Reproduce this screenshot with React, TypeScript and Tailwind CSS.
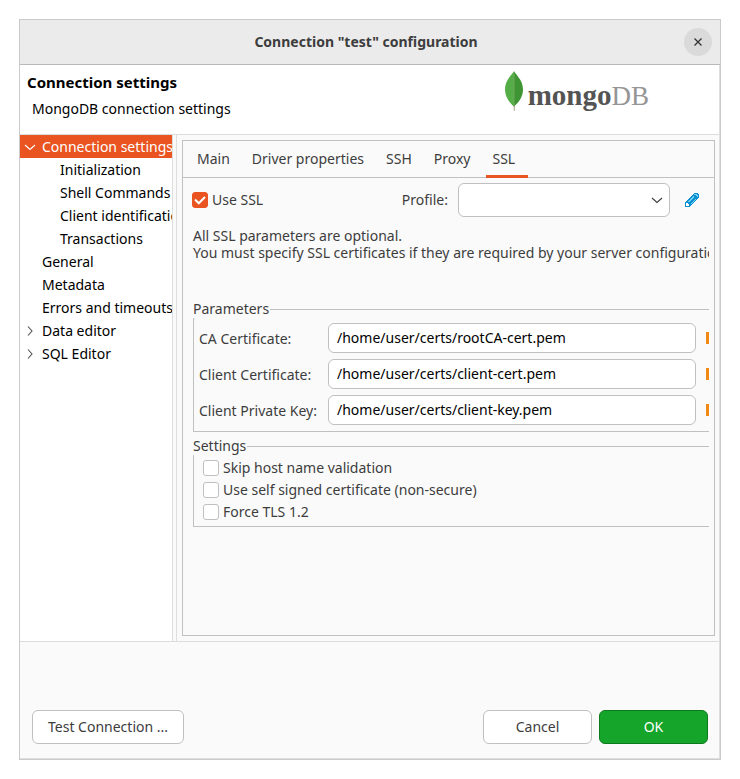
import React, { useState } from "react";

type TreeItem = { label: string; level: 0 | 1; arrow?: "open" | "closed"; selected?: boolean };

const tree: TreeItem[] = [
  { label: "Connection settings", level: 0, arrow: "open", selected: true },
  { label: "Initialization", level: 1 },
  { label: "Shell Commands", level: 1 },
  { label: "Client identification", level: 1 },
  { label: "Transactions", level: 1 },
  { label: "General", level: 0 },
  { label: "Metadata", level: 0 },
  { label: "Errors and timeouts", level: 0 },
  { label: "Data editor", level: 0, arrow: "closed" },
  { label: "SQL Editor", level: 0, arrow: "closed" },
];

const tabs = ["Main", "Driver properties", "SSH", "Proxy", "SSL"];

const certificates = [
  { id: "ca", label: "CA Certificate:", path: "/home/user/certs/rootCA-cert.pem" },
  { id: "client", label: "Client Certificate:", path: "/home/user/certs/client-cert.pem" },
  { id: "key", label: "Client Private Key:", path: "/home/user/certs/client-key.pem" },
];

const options = ["Skip host name validation", "Use self signed certificate (non-secure)", "Force TLS 1.2"];

function Chevron({ open, className = "" }: { open: boolean; className?: string }) {
  return (
    <svg viewBox="0 0 12 12" fill="none" stroke="currentColor" className={`size-3 shrink-0 ${className}`} aria-hidden="true">
      <path d={open ? "M1 4l5 4.5L11 4" : "M4 1.5l4 4.5-4 4.5"} strokeWidth="1.1" />
    </svg>
  );
}

function CheckBox({ label, checked = false }: { label: string; checked?: boolean }) {
  return (
    <label className="flex h-[22px] items-center gap-1 whitespace-nowrap">
      <span className="grid size-4 shrink-0">
        <input
          type="checkbox"
          defaultChecked={checked}
          className="peer col-start-1 row-start-1 size-4 appearance-none rounded-[3px] border border-[#c0c0c0] bg-white checked:border-[#e95420] checked:bg-[#e95420]"
        />
        <svg viewBox="0 0 16 16" fill="none" className="pointer-events-none col-start-1 row-start-1 hidden size-4 peer-checked:block" aria-hidden="true">
          <path d="M3 7.5L6.8 11.3L13 5" stroke="#fff" strokeWidth="2" />
        </svg>
      </span>
      {label}
    </label>
  );
}

function Leaf() {
  return (
    <svg viewBox="0 0 20 42" className="h-[42px] w-5" aria-hidden="true">
      <path d="M9.4 34h1.6l-.2 7h-1z" fill="#b8b09a" />
      <path d="M10 1C9 4 1 9.500 1 19.500c0 8 5 13.500 9 17z" fill="#55ad47" />
      <path d="M10 1c1 3 9 8.500 9 18.500 0 8-5 13.500-9 17z" fill="#3f9533" />
      <path d="M10 4v32" stroke="#7fae6d" strokeWidth=".7" />
    </svg>
  );
}

function Pencil() {
  return (
    <svg viewBox="0 0 14 14" className="size-[14px]" shapeRendering="crispEdges" aria-hidden="true">
      <path d="M0 14V9h1V8h1V7h1V6h1V5h1V4h1V3h1V2h1V1h1V0h4v1h1v4h-1v1h-1v1h-1v1h-1v1H9v1H8v1H7v1H6v1H5v1z" fill="#0d8fd0" />
      <path d="M3 9V8h1V7h1V6h1V5h1V4h1V3h1v2H8v1H7v1H6v1H5v1zM6 11v-1h1V9h1V8h1V7h1V6h1v1h-1v1H9v1H8v1H7v1zM9 2V1h3v1h1v2h-1V3h-1V2z" fill="#6fd0f5" />
      <path d="M1 13v-3h2v1h1v2z" fill="#fff" />
    </svg>
  );
}

function Group({ title, className, children }: { title: string; className: string; children: React.ReactNode }) {
  return (
    <fieldset className={`min-w-0 border border-r-0 border-[#c0c0c0] ${className}`}>
      <legend className="-ml-px bg-[#fafafa] pr-px leading-[18px]">{title}</legend>
      {children}
    </fieldset>
  );
}

export default function App() {
  const [activeTab, setActiveTab] = useState("SSL");

  return (
    <div className="flex min-h-screen bg-white p-[19px] font-['Noto_Sans',sans-serif] text-[14px] leading-[18px] text-[#3d3d3d]">
      <div className="flex min-w-0 flex-1 flex-col border border-[#cbcbcb] bg-[#fafafa]">
        <header className="grid h-[45px] grid-cols-[1fr_auto_1fr] items-center border-b border-[#b8b8b8] bg-[#ebebeb] pr-2">
          <h1 className="col-start-2 font-bold">Connection "test" configuration</h1>
          <button type="button" aria-label="Close" className="flex size-7 items-center justify-center justify-self-end rounded-full bg-[#dadada]">
            <svg viewBox="0 0 8 8" className="size-2" stroke="#333" strokeWidth="1.3" aria-hidden="true">
              <path d="M.5.5l7 7M7.5.5l-7 7" />
            </svg>
          </button>
        </header>

        <div className="flex min-h-0 flex-1 flex-col border-r border-b border-[#dedede]">
          <div className="flex h-[70px] items-start justify-between border-b border-[#dcdcdc] bg-white pt-2 pr-[70px] pl-[7px] text-black">
            <div>
              <h2 className="text-[15px] font-bold">Connection settings</h2>
              <p className="mt-[9px] pl-[5px]">MongoDB connection settings</p>
            </div>
            <div className="-mt-[3px] flex items-start gap-1 font-['Liberation_Serif',serif] leading-[42px]">
              <Leaf />
              <div className="mt-1 flex items-baseline">
                <span className="text-[29px] font-bold text-[#545454]">mongo</span>
                <span className="text-[27px] text-[#959595]">DB</span>
              </div>
            </div>
          </div>

          <div className="flex min-h-0 flex-1 border-b border-[#dcdcdc]">
            <nav className="w-[153px] shrink-0 overflow-hidden border-r border-[#dedede] bg-white text-black">
              <ul>
                {tree.map((item) => (
                  <li
                    key={item.label}
                    className={`flex h-[23px] items-center whitespace-nowrap ${item.level ? "pl-10" : "pl-1"} ${
                      item.selected ? "bg-[#e95420] text-white" : ""
                    }`}
                  >
                    {item.level === 0 && (
                      <span className="flex w-[18px] shrink-0 text-[#505050]">
                        {item.arrow && <Chevron open={item.arrow === "open"} className={item.selected ? "text-white" : ""} />}
                      </span>
                    )}
                    <span>{item.label}</span>
                  </li>
                ))}
              </ul>
            </nav>

            <div className="ml-[3px] flex min-w-0 flex-1 border-l border-[#dedede] p-[5px] pr-1">
              <section className="min-w-0 flex-1 border border-[#c0c0c0]">
                <div role="tablist" className="flex h-[37px] gap-1 border-b border-[#c0c0c0] pl-2">
                  {tabs.map((tab) => (
                    <button
                      key={tab}
                      type="button"
                      role="tab"
                      aria-selected={tab === activeTab}
                      onClick={() => setActiveTab(tab)}
                      className={`-mb-px h-[37px] min-w-[42px] border-b-[3px] pt-0.5 pr-3 pl-[6px] text-left ${
                        tab === activeTab ? "border-[#e95420]" : "border-transparent"
                      }`}
                    >
                      {tab}
                    </button>
                  ))}
                </div>

                <div className="mr-[5px] ml-[9px] overflow-hidden pt-[5px]">
                  <div className="flex items-center">
                    <CheckBox label="Use SSL" checked />
                    <label htmlFor="profile" className="mr-[10px] ml-auto">
                      Profile:
                    </label>
                    <span className="grid items-center">
                      <select id="profile" className="col-start-1 row-start-1 h-[34px] w-[212px] appearance-none rounded-md border border-[#c0c0c0] bg-white px-2">
                        <option></option>
                      </select>
                      <Chevron open className="pointer-events-none col-start-1 row-start-1 mr-[7px] justify-self-end" />
                    </span>
                    <button type="button" aria-label="Edit profile" className="mr-[10px] ml-[15px]">
                      <Pencil />
                    </button>
                  </div>

                  <p className="mt-[10px] ml-px leading-[17px] whitespace-nowrap">
                    All SSL parameters are optional.
                    <br />
                    You must specify SSL certificates if they are required by your server configuration.
                  </p>

                  <Group title="Parameters" className="mt-[39px] ml-px h-[132px]">
                    <div className="mt-[5px] ml-[5px] flex flex-col gap-[6px]">
                      {certificates.map((cert) => (
                        <div key={cert.id} className="flex items-center">
                          <label htmlFor={cert.id} className="w-[129px] shrink-0 pt-0.5 whitespace-nowrap">
                            {cert.label}
                          </label>
                          <input
                            id={cert.id}
                            defaultValue={cert.path}
                            className="h-[30px] min-w-0 flex-1 rounded-md border border-[#c0c0c0] bg-white px-2 pb-0.5 text-black"
                          />
                          <span className="ml-[10px] h-3 w-[3px] shrink-0 bg-[#f08a12]" />
                        </div>
                      ))}
                    </div>
                  </Group>

                  <Group title="Settings" className="mt-[5px] ml-px h-[90px]">
                    <div className="mt-0.5 ml-[9px]">
                      {options.map((option) => (
                        <CheckBox key={option} label={option} />
                      ))}
                    </div>
                  </Group>
                </div>
              </section>
            </div>
          </div>

          <footer className="flex h-[116px] items-end gap-[7px] pr-[11px] pb-[14px] pl-3">
            <button type="button" className="mr-auto h-[34px] w-[152px] rounded-md border border-[#c0c0c0] bg-white">
              Test Connection ...
            </button>
            <button type="button" className="h-[34px] w-[109px] rounded-md border border-[#c0c0c0] bg-white">
              Cancel
            </button>
            <button type="button" className="h-[34px] w-[109px] rounded-md border border-[#0d7a1d] bg-[#15a52b] text-white">
              OK
            </button>
          </footer>
        </div>
      </div>
    </div>
  );
}
